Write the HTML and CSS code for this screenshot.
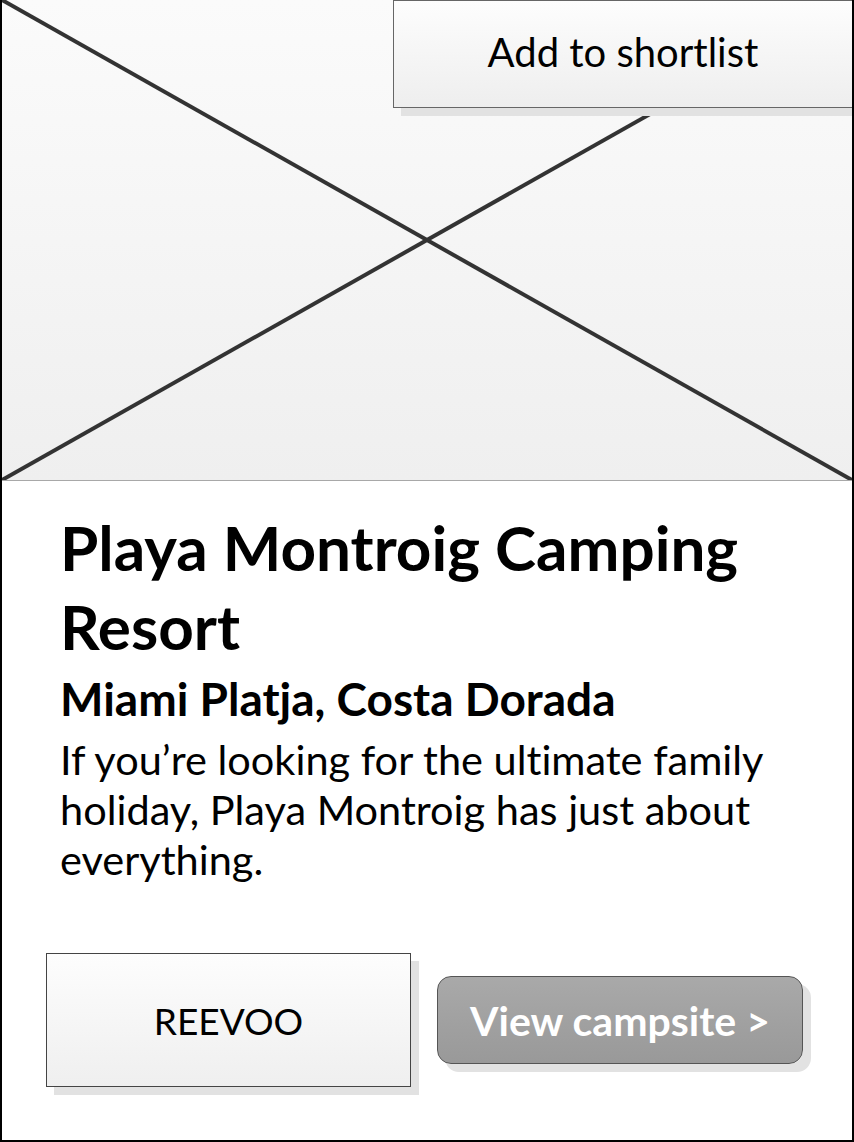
FILE: index.html
```html
<!DOCTYPE html>
<html lang="en">
<head>
<meta charset="utf-8">
<title>Playa Montroig Camping Resort</title>
<link rel="stylesheet" href="styles.css">
</head>
<body>
<div class="frame">
  <div class="hero">
    <svg class="cross" viewBox="0 0 850 480" preserveAspectRatio="none" aria-hidden="true">
      <line x1="0" y1="0" x2="850" y2="480"/>
      <line x1="0" y1="480" x2="850" y2="0"/>
    </svg>
    <button class="shortlist">Add to shortlist</button>
  </div>
  <div class="content">
    <h1 class="title">Playa Montroig Camping Resort</h1>
    <h2 class="sub">Miami Platja, Costa Dorada</h2>
    <p class="desc">If you’re looking for the ultimate family holiday, Playa Montroig has just about everything.</p>
  </div>
  <div class="actions">
    <div class="reevoo">REEVOO</div>
    <button class="view">View campsite &gt;</button>
  </div>
</div>
</body>
</html>
```
FILE: styles.css
```css
* { box-sizing: border-box; }
html, body { margin: 0; padding: 0; background: #fff; }
body {
  font-family: Lato, "Open Sans", sans-serif;
  color: #000;
}
.nolig, .shortlist, .title, .sub, .desc, .reevoo, .view {
  font-variant-ligatures: none !important;
  font-feature-settings: "liga" 0, "dlig" 0, "calt" 0, "clig" 0 !important;
}

.frame {
  width: 854px;
  height: 1142px;
  border: 2px solid #000;
  border-top: none;
  display: flex;
  flex-direction: column;
  overflow: hidden;
}

.hero {
  position: relative;
  height: 481px;
  flex: none;
  background: linear-gradient(#fbfbfb, #efefef);
  border-bottom: 1px solid #a8a8a8;
}
.cross {
  position: absolute;
  left: 0; top: 0;
  width: 100%;
  height: 480px;
}
.cross line { stroke: #333; stroke-width: 4; }

.shortlist {
  position: absolute;
  top: 0;
  right: 0;
  width: 459px;
  height: 108px;
  border: 1px solid #666;
  border-right: none;
  background: linear-gradient(#fdfdfd, #eeeeee);
  box-shadow: 8px 8px 0 #e2e2e2;
  font: 400 40px/1 Lato, sans-serif;
  color: #000;
  padding: 0 0 4px;
}

.content { padding: 27px 0 0 58px; }
.title {
  margin: 0;
  font: 700 62px/79px Lato, sans-serif;
}
.sub {
  margin: 0;
  font: 700 46px/64px Lato, sans-serif;
  padding-top: 1px;
}
.desc {
  margin: 3px 0 0;
  font: 400 41.5px/50px Lato, sans-serif;
  width: 740px;
}

.actions {
  display: flex;
  align-items: center;
  gap: 26px;
  padding-left: 44px;
  margin-top: 69px;
}
.reevoo {
  width: 365px;
  height: 134px;
  border: 1px solid #444;
  background: linear-gradient(#fdfdfd, #efefef);
  box-shadow: 8px 8px 0 #e2e2e2;
  display: flex;
  align-items: center;
  justify-content: center;
  font: 400 37px/1 Lato, sans-serif;
}
.view {
  width: 366px;
  height: 88px;
  border: 1px solid #555;
  border-radius: 14px;
  background: linear-gradient(#a9a9a9, #999);
  box-shadow: 8px 8px 0 #e2e2e2;
  color: #fff;
  font: 700 41px/1 Lato, sans-serif;
  padding: 0;
}
```
